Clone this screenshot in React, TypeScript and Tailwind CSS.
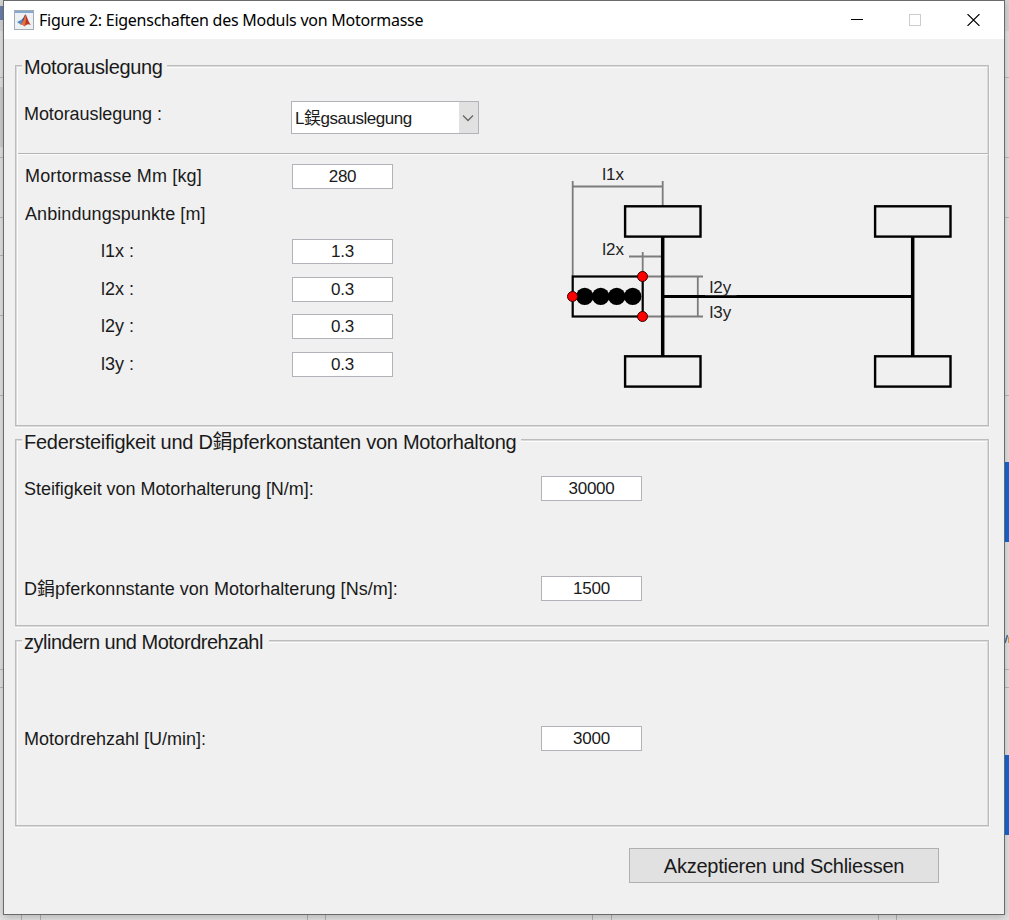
import type { ReactNode } from "react";

const etched =
  "border border-[#bcbcbc] shadow-[inset_1px_1px_0_#dadada,inset_-1px_0_0_#dadada,inset_2px_2px_0_#fbfbfb,1px_0_0_#f8f8f8,0_1px_0_#d8d8d8,0_2px_0_#fbfbfb]";

function Legend({ className, children }: { className: string; children: ReactNode }) {
  return (
    <h2 className={`-mt-[9px] ml-[6px] h-5 whitespace-nowrap bg-[#f0f0f0] pl-[2px] text-[20px] leading-5 ${className}`}>
      {children}
    </h2>
  );
}

function Edit({ value }: { value: string }) {
  return (
    <input
      readOnly
      value={value}
      className="block h-[25px] w-[101px] shrink-0 border border-[#b2b2b8] bg-white pt-px text-center text-[17px] tracking-[-0.25px] outline-none"
    />
  );
}

function MatlabIcon() {
  return (
    <svg width="20" height="20" viewBox="0 0 20 20">
      <rect x="0.5" y="0.5" width="19" height="19" fill="#eef1f4" stroke="#a3abb5" />
      <rect x="1" y="1" width="18" height="2" fill="#86a8cc" />
      <path d="M3 12 L7.5 9.7 L9.5 12 L6.5 14.5 Z" fill="#4f8cc4" />
      <path d="M7.5 9.7 C9.3 9 10 5.5 11.5 4.3 L9.5 12 Z" fill="#2f5f95" />
      <path d="M11.5 4.3 C12.8 5.5 14 11.5 17 15.2 C14.5 13.5 13 14 10.3 16.5 C9.4 15 8.5 14.4 6.5 14.5 C9.5 12.5 10 6.5 11.5 4.3 Z" fill="#b8352a" />
      <path d="M11.5 4.3 C12.2 8 12.2 13 10.3 16.5 C9.4 15 8.5 14.4 6.5 14.5 C9.5 12.5 10.5 8 11.5 4.3 Z" fill="#e8743a" />
    </svg>
  );
}

function Chassis() {
  return (
    <svg width="410" height="240" viewBox="550 160 410 240" fill="none" className="shrink-0">
      <g stroke="#7c7c7c" strokeWidth="1.8">
        <path d="M572.7 181V276M662.7 181V206M572.7 186.5H662.7" />
        <path d="M642.7 252V274M629 256.5H662" />
        <path d="M647 276.5H703M647 316.5H703M697.8 276.5V316.5" />
      </g>
      <g stroke="#000" strokeWidth="3.5">
        <path d="M662.7 237V356M912.7 237V356" />
        <path d="M662.7 296.4H912.7" strokeWidth="3" />
      </g>
      <g stroke="#000" strokeWidth="2.4">
        <rect x="625.1" y="206.3" width="75.4" height="30.3" />
        <rect x="625.1" y="356.3" width="75.4" height="30.3" />
        <rect x="875.1" y="206.3" width="75.4" height="30.3" />
        <rect x="875.1" y="356.3" width="75.4" height="30.3" />
      </g>
      <rect x="572.7" y="276.5" width="70" height="40" stroke="#000" strokeWidth="2.2" />
      <g fill="#000">
        <circle cx="584.7" cy="296.4" r="8.7" />
        <circle cx="600.7" cy="296.4" r="8.7" />
        <circle cx="616.7" cy="296.4" r="8.7" />
        <circle cx="632.7" cy="296.4" r="8.7" />
      </g>
      <g fill="#f00" stroke="#300" strokeWidth="1">
        <circle cx="572.5" cy="296.5" r="5" />
        <circle cx="642.5" cy="276.5" r="5" />
        <circle cx="642.5" cy="316.5" r="5" />
      </g>
      <rect x="705" y="280" width="31.5" height="15.2" fill="#f0f0f0" />
      <g fill="#222" fontSize="17">
        <text x="602.3" y="180">l1x</text>
        <text x="602.3" y="255">l2x</text>
        <text x="709.5" y="292.5">l2y</text>
        <text x="709.5" y="317.5">l3y</text>
      </g>
    </svg>
  );
}

/* Slivers of the window behind that show round the dialog's edges. */
function Backdrop() {
  return (
    <svg width="1009" height="920" className="absolute inset-0">
      <rect width="1009" height="920" fill="#e2e2e2" />
      <rect x="0" y="0" width="1009" height="31" fill="#d6d6d6" />
      <rect x="0" y="6" width="3" height="14" fill="#6c7fae" />
      <rect x="0" y="87" width="3" height="60" fill="#cfcfcf" />
      <path
        d="M0 77.5H1009M0 157.5H1009M0 217.5H1009M0 255.5H3M0 315.5H3M0 395.5H1009M0 669.5H1009M0 687.5H1009"
        stroke="#b9b9b9"
      />
      <path
        d="M21.5 915V920M40.5 915V920M307.5 915V920M325.5 915V920M592.5 915V920M611.5 915V920M878.5 915V920M896.5 915V920"
        stroke="#b0b0b0"
      />
      <rect x="1004" y="462" width="5" height="80" fill="#1565d8" />
      <rect x="1004" y="755" width="5" height="80" fill="#1565d8" />
      <path d="M1007.5 635L1005 643" stroke="#4a6f94" strokeWidth="1.5" />
      <path d="M1008.5 637V643" stroke="#d99a3c" />
    </svg>
  );
}

const points = [
  { label: "l1x :", value: "1.3" },
  { label: "l2x :", value: "0.3" },
  { label: "l2y :", value: "0.3" },
  { label: "l3y :", value: "0.3" },
];

export default function App() {
  return (
    <div className="relative h-[920px] w-[1009px] overflow-hidden font-['Liberation_Sans','Noto_Sans_CJK_SC',sans-serif] text-[18px] leading-5 text-[#1a1a1a]">
      <Backdrop />
      <main className="relative ml-[3px] h-[915px] w-[1002px] border border-[#6b6b6b] bg-[#f0f0f0] shadow-[0_2px_8px_rgba(0,0,0,0.22)]">
        <header className="flex h-[38px] items-center bg-white pl-[10px]">
          <MatlabIcon />
          <h1 className="mb-px ml-[5px] grow whitespace-nowrap font-['Noto_Sans',sans-serif] text-[16px] tracking-[-0.25px] text-black">
            Figure 2: Eigenschaften des Moduls von Motormasse
          </h1>
          <div className="mr-[24px] flex items-center gap-[46px]">
            <svg width="12" height="12"><path d="M0 5.5H12" stroke="#000" /></svg>
            <svg width="12" height="12"><rect x=".5" y=".5" width="11" height="11" fill="none" stroke="#ccc" /></svg>
            <svg width="13" height="12"><path d="M.5 0L12.5 12M12.5 0L.5 12" stroke="#000" strokeWidth="1.1" /></svg>
          </div>
        </header>

        <section className={`ml-[11px] mt-[26px] h-[361px] w-[974px] ${etched}`}>
          <Legend className="w-[145px] tracking-[-0.35px]">Motorauslegung</Legend>
          <div className="flex h-[76px] pl-2">
            <span className="w-[267px] pt-[27px] tracking-[-0.08px]">Motorauslegung :</span>
            <div className="mt-6 flex h-[33px] w-[188px] border border-[#b2b2b8] bg-white">
              <span className="grow whitespace-nowrap pl-[3px] pt-[7px] text-[17px] tracking-[-0.48px]">L鋘gsauslegung</span>
              <span className="flex w-[19px] items-center justify-center bg-[#e1e1e1] pr-[2px]">
                <svg width="12" height="8" fill="none"><path d="M1 1.5L6 6.5L11 1.5" stroke="#666" strokeWidth="1.3" /></svg>
              </span>
            </div>
          </div>
          <div className="ml-[2px] flex h-[273px] border-t border-[#b4b4b4] pt-[4px] shadow-[inset_0_1px_0_#fbfbfb]">
            <div className="w-[532px] shrink-0 pl-[7px]">
              <div className="flex h-[37.5px] items-center">
                <span className="w-[267px] pb-[2px] tracking-[0.15px]">Mortormasse Mm [kg]</span>
                <Edit value="280" />
              </div>
              <div className="flex h-[37.5px] items-center tracking-[0.07px]">Anbindungspunkte [m]</div>
              {points.map((p) => (
                <div key={p.label} className="flex h-[37.5px] items-center">
                  <span className="w-[267px] pb-[1px] pl-[76px]">{p.label}</span>
                  <Edit value={p.value} />
                </div>
              ))}
            </div>
            <div className="pt-[2px]">
              <Chassis />
            </div>
          </div>
        </section>

        <section className={`ml-[11px] mt-[13px] h-[187px] w-[974px] ${etched}`}>
          <Legend className="w-[499px] pt-px tracking-[-0.27px]">Federsteifigkeit und D鋗pferkonstanten von Motorhaltong</Legend>
          <div className="mt-[25px] flex h-[25px] items-center pl-2">
            <span className="w-[517px] tracking-[-0.04px]">Steifigkeit von Motorhalterung [N/m]:</span>
            <Edit value="30000" />
          </div>
          <div className="mt-[75px] flex h-[25px] items-center pl-2">
            <span className="w-[517px] tracking-[0.04px]">D鋗pferkonnstante von Motorhalterung [Ns/m]:</span>
            <Edit value="1500" />
          </div>
        </section>

        <section className={`ml-[11px] mt-[14px] h-[186px] w-[974px] ${etched}`}>
          <Legend className="w-[247px] tracking-[-0.5px]">zylindern und Motordrehzahl</Legend>
          <div className="mt-[74px] flex h-[25px] items-center pl-2">
            <span className="w-[517px]">Motordrehzahl [U/min]:</span>
            <Edit value="3000" />
          </div>
        </section>

        <button className="ml-[625px] mt-[22px] block h-[35px] w-[310px] border border-[#b0b0b0] bg-[#e1e1e1] text-[20px] tracking-[-0.25px]">
          Akzeptieren und Schliessen
        </button>
      </main>
    </div>
  );
}
